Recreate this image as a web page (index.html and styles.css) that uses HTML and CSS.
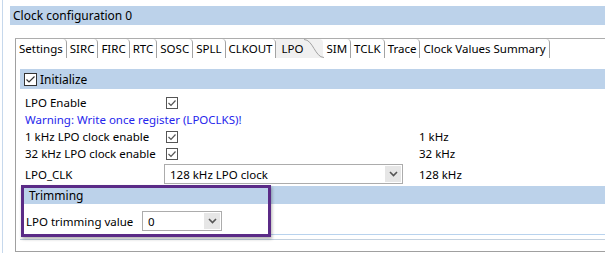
FILE: index.html
```html
<!DOCTYPE html>
<html lang="en">

<head>
    <meta charset="UTF-8">
    <title>Clock configuration 0</title>
    <link rel="stylesheet" href="styles.css">
</head>

<body>
    <div class="view">
        <div class="title">Clock configuration 0</div>

        <div class="folder">
            <div class="tabs">
                <div class="tab first">Settings</div>
                <div class="tab">SIRC</div>
                <div class="tab">FIRC</div>
                <div class="tab">RTC</div>
                <div class="tab">SOSC</div>
                <div class="tab">SPLL</div>
                <div class="tab">CLKOUT</div>
                <div class="tab active">
                    <span>LPO</span>
                    <svg class="curve" width="20" height="19" viewBox="0 0 20 19">
                        <path d="M0 0.5 C9 0.5 11 18.5 20 18.5 L0 19 Z" fill="#f0f0f0" />
                        <path d="M0 0.5 C9 0.5 11 18.5 20 18.5" fill="none" stroke="#a3a3a3" />
                    </svg>
                </div>
                <div class="tab">SIM</div>
                <div class="tab">TCLK</div>
                <div class="tab">Trace</div>
                <div class="tab">Clock Values Summary</div>
            </div>

            <div class="panel">
                <div class="group">
                    <div class="band">
                        <svg class="check" width="13" height="13" viewBox="0 0 13 13">
                            <rect x="0.5" y="0.5" width="12" height="12" fill="#fff" stroke="#333" />
                            <polyline points="2.5,6.5 5,9 10.5,3.5" fill="none" stroke="#333" stroke-width="1.2" />
                        </svg>
                        Initialize
                    </div>

                    <div class="rows">
                        <div class="label">LPO Enable</div>
                        <div class="control">
                            <svg class="check" width="12" height="12" viewBox="0 0 12 12">
                                <rect x="0.5" y="0.5" width="11" height="11" fill="#fff" stroke="#555" />
                                <polyline points="2.5,6 5,8.5 9.5,3.5" fill="none" stroke="#555" stroke-width="1.2" />
                            </svg>
                        </div>
                        <div class="value"></div>

                        <div class="warning">Warning: Write once register (LPOCLKS)!</div>

                        <div class="label">1 kHz LPO clock enable</div>
                        <div class="control">
                            <svg class="check" width="12" height="12" viewBox="0 0 12 12">
                                <rect x="0.5" y="0.5" width="11" height="11" fill="#fff" stroke="#555" />
                                <polyline points="2.5,6 5,8.5 9.5,3.5" fill="none" stroke="#555" stroke-width="1.2" />
                            </svg>
                        </div>
                        <div class="value">1 kHz</div>

                        <div class="label">32 kHz LPO clock enable</div>
                        <div class="control">
                            <svg class="check" width="12" height="12" viewBox="0 0 12 12">
                                <rect x="0.5" y="0.5" width="11" height="11" fill="#fff" stroke="#555" />
                                <polyline points="2.5,6 5,8.5 9.5,3.5" fill="none" stroke="#555" stroke-width="1.2" />
                            </svg>
                        </div>
                        <div class="value">32 kHz</div>

                        <div class="label tall">LPO_CLK</div>
                        <div class="control tall">
                            <div class="combo wide">
                                <span class="combo-text">128 kHz LPO clock</span>
                                <span class="combo-btn">
                                    <svg width="9" height="6" viewBox="0 0 9 6">
                                        <polyline points="1,1 4.5,4.5 8,1" fill="none" stroke="#555" stroke-width="1.6" />
                                    </svg>
                                </span>
                            </div>
                        </div>
                        <div class="value tall">128 kHz</div>
                    </div>

                    <div class="sub">
                        <div class="band small">Trimming</div>
                        <div class="sub-row">
                            <div class="sub-label">LPO trimming value</div>
                            <div class="combo narrow">
                                <span class="combo-text">0</span>
                                <span class="combo-btn">
                                    <svg width="9" height="6" viewBox="0 0 9 6">
                                        <polyline points="1,1 4.5,4.5 8,1" fill="none" stroke="#555" stroke-width="1.6" />
                                    </svg>
                                </span>
                            </div>
                        </div>
                    </div>
                </div>
            </div>
        </div>

        <div class="mark"></div>
    </div>
</body>

</html>
```

FILE: styles.css
```css
body {
    margin: 0;
    font-family: "Segoe UI", "Noto Sans", sans-serif;
    font-size: 11.5px;
    color: #000;
    background: #fff;
}

.view {
    position: relative;
    margin-left: 2px;
    padding: 6px 0 0 7px;
    border-left: 1px solid #c6d8ec;
    height: 253px;
    box-sizing: border-box;
}

.title {
    height: 19px;
    line-height: 19px;
    padding-left: 3px;
    background: #bcd2ea;
    font-size: 12px;
}

.folder {
    margin: 13px 0 0 5px;
}

/* tab strip */
.tabs {
    display: flex;
    height: 19px;
    border-top: 1px solid #adadad;
}

.tab {
    display: flex;
    align-items: center;
    padding: 0 3px;
    border-right: 1px solid #a3a3a3;
    border-top-right-radius: 4px;
    white-space: nowrap;
}

.tab.first {
    border-left: 1px solid #a3a3a3;
}

.tab.active {
    background: #f0f0f0;
    border-right: none;
    padding: 0 0 0 5px;
    align-items: stretch;
}

.tab.active span {
    display: flex;
    align-items: center;
}

.tab.active .curve {
    margin-left: 1px;
    margin-right: -1px;
}

/* panel */
.panel {
    border-left: 1px solid #a0a0a0;
    border-bottom: 1px solid #a0a0a0;
    padding: 11px 0 11px 4px;
}

.group {
    border-bottom: 1px solid #c3d1df;
    padding-bottom: 4px;
}

.band {
    display: flex;
    align-items: center;
    gap: 3px;
    height: 20px;
    padding-left: 4px;
    background: #bcd2ea;
    font-size: 12px;
}

.band.small {
    height: 18px;
    padding-left: 5px;
}

.rows {
    display: grid;
    grid-template-columns: 140px 254px auto;
    padding: 5px 0 0 5px;
}

.label,
.control,
.value {
    display: flex;
    align-items: center;
    height: 17px;
}

.tall {
    height: 22px;
    margin-top: 1px;
}

.control .check {
    margin-left: 1px;
}

.warning {
    grid-column: 1 / 4;
    height: 17px;
    line-height: 17px;
    color: #2626ec;
}

.combo {
    display: flex;
    align-items: center;
    height: 20px;
    box-sizing: border-box;
    border: 1px solid #acacac;
    background: #fff;
}

.combo.wide {
    width: 239px;
    margin-left: -1px;
}

.combo.narrow {
    width: 80px;
}

.combo-text {
    flex: 1;
    padding-left: 5px;
}

.combo-btn {
    display: flex;
    align-items: center;
    justify-content: center;
    width: 16px;
    height: 16px;
    margin-right: 1px;
    background: #e6e6e6;
}

.sub {
    margin: 1px 0 0 4px;
    border-bottom: 1px solid #b9d3ee;
    padding-bottom: 3px;
}

.sub-row {
    display: flex;
    align-items: center;
    padding: 7px 0 0 2px;
}

.sub-label {
    width: 116px;
}

/* annotation box drawn over the trimming group */
.mark {
    position: absolute;
    left: 18px;
    top: 185px;
    width: 250px;
    height: 52px;
    box-sizing: border-box;
    border: 3px solid #5b2b87;
    box-shadow: 1px 2px 3px rgba(0, 0, 0, 0.3);
}
```
